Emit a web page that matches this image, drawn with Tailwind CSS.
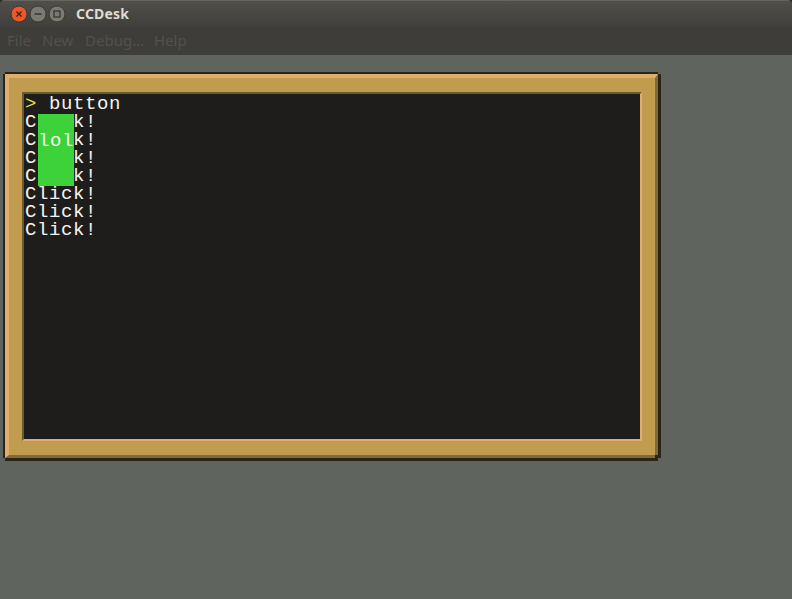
<!DOCTYPE html>
<html lang="en">
<head>
<meta charset="UTF-8">
<title>CCDesk</title>
<script src="https://cdn.jsdelivr.net/npm/@tailwindcss/browser@4"></script>
</head>
<body class="bg-[#2e2d29] overflow-hidden">
<div class="w-[792px] h-[599px] flex flex-col rounded-t-[5px] overflow-hidden bg-[#5f645e] font-['Noto_Sans',sans-serif]">
  <!-- title bar -->
  <div class="h-[27px] flex items-center pl-[10px] pb-px bg-gradient-to-b from-[#504f4a] to-[#403f3b] border-t border-[#66655f]">
    <div class="flex items-center gap-[1px] w-[66px]">
      <svg width="18" height="18" viewBox="0 0 18 18">
        <circle cx="9" cy="9" r="8" fill="#e9572a" stroke="#3b3a36"/>
        <path d="M6.5 6.5l5 5M11.5 6.5l-5 5" stroke="#4a1d0c" stroke-width="1.4"/>
      </svg>
      <svg width="18" height="18" viewBox="0 0 18 18">
        <circle cx="9" cy="9" r="8" fill="#7b7a73" stroke="#3b3a36"/>
        <path d="M5.5 9h7" stroke="#37362f" stroke-width="1.6"/>
      </svg>
      <svg width="18" height="18" viewBox="0 0 18 18">
        <circle cx="9" cy="9" r="8" fill="#7b7a73" stroke="#3b3a36"/>
        <rect x="6" y="6" width="6" height="6" fill="none" stroke="#37362f" stroke-width="1.3"/>
      </svg>
    </div>
    <span class="text-[14px] font-bold text-[#dfdbd2] tracking-[0.2px]">CCDesk</span>
  </div>
  <!-- menu bar -->
  <div class="h-[28px] flex items-center pb-[2px] bg-[#3e3d39] text-[15px] text-[#52514c]">
    <span class="ml-[7px] w-[35px]">File</span>
    <span class="w-[43px]">New</span>
    <span class="w-[69px]">Debug...</span>
    <span>Help</span>
  </div>
  <!-- wooden frame -->
  <div class="relative shrink-0 mt-[17px] ml-[3px] w-[658px] h-[389px] border-t-2 border-l-2 border-b-[3px] border-r-[3px] border-[#2a2419]">
    <div class="w-full h-full flex bg-[#c19c4f] border-t-[4px] border-l-[4px] border-b-[3px] border-r-[3px] border-t-[#dfae6e] border-l-[#dfae6e] border-b-[#806a3a] border-r-[#806a3a]">
      <div class="shrink-0 mt-[14px] ml-[13px] w-[620px] h-[349px] border-2 border-t-[#6b5a30] border-l-[#6b5a30] border-b-[#dfae6e] border-r-[#dfae6e]">
        <div class="relative w-full h-full bg-[#1e1d1b] pl-px pt-px font-['Liberation_Mono',monospace] text-[19px] tracking-[0.6px] leading-[18px] text-[#f4f4f0]">
          <div class="whitespace-pre"><span class="text-[#e8df5a]">&gt;</span> button</div>
          <div>Click!</div>
          <div>Click!</div>
          <div>Click!</div>
          <div>Click!</div>
          <div>Click!</div>
          <div>Click!</div>
          <div>Click!</div>
          <div class="absolute left-[14px] top-[20px] w-[36px] h-[72px] bg-[#3ed23a] pt-[18px] text-center">lol</div>
        </div>
      </div>
    </div>
    <!-- notched corners -->
    <div class="absolute -left-[2px] -top-[2px] w-[2px] h-[2px] bg-[#5f645e]"></div>
    <div class="absolute -right-[3px] -top-[2px] w-[3px] h-[2px] bg-[#5f645e]"></div>
    <div class="absolute -left-[2px] -bottom-[3px] w-[2px] h-[3px] bg-[#5f645e]"></div>
    <div class="absolute -right-[3px] -bottom-[3px] w-[3px] h-[3px] bg-[#5f645e]"></div>
    <div class="absolute right-0 bottom-0 w-[3px] h-[3px] bg-[#2a2419]"></div>
  </div>
</div>
</body>
</html>
